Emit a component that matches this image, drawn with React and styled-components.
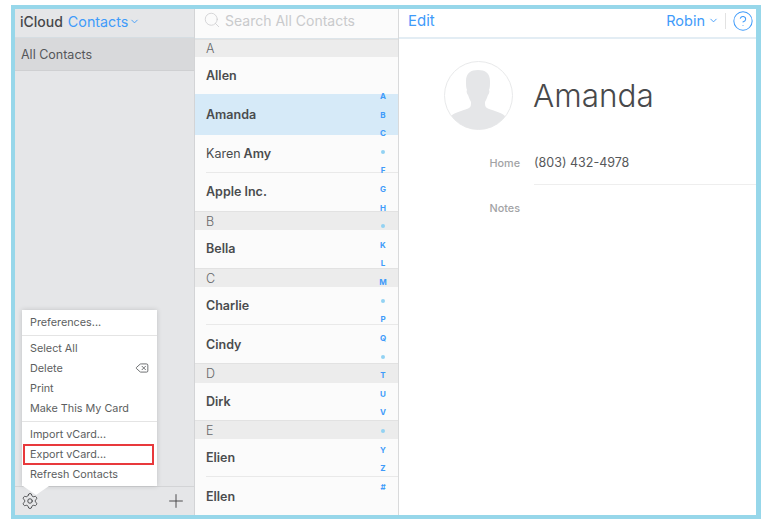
import React from 'react';
import styled, { createGlobalStyle } from 'styled-components';
import { Search, ChevronDown, Settings, Delete, Plus, CircleHelp } from 'lucide-react';

const GlobalStyle = createGlobalStyle`
    html, body {
        margin: 0;
        padding: 0;
        background: #ffffff;
    }
    *, *::before, *::after {
        box-sizing: border-box;
    }
`;

// --- Page frame ---

const Page = styled.div`
    width: 772px;
    height: 521px;
    padding: 5px 11px 2px 11px;
    font-family: Inter, "Liberation Sans", sans-serif;
    color: #444648;
    overflow: hidden;
`;

const Frame = styled.div`
    width: 750px;
    height: 514px;
    border: solid #97d7ea;
    border-width: 4px 5px 4px 4px;
    display: flex;
    background: #ffffff;
`;

// --- Sidebar ---

const Sidebar = styled.aside`
    position: relative;
    width: 180px;
    display: flex;
    flex-direction: column;
    background: #e5e6e8;
    border-right: 1px solid #d3d4d6;
`;

const SidebarHead = styled.div`
    height: 29px;
    padding: 0 0 3px 5px;
    display: flex;
    align-items: center;
    gap: 5px;
    border-bottom: 1px solid #d5dde2;
`;

const Brand = styled.span`
    color: #45474a;
    font-size: 14px;
    font-weight: 500;
`;

const BlueLink = styled.span`
    color: #3f9bfa;
    display: inline-flex;
    align-items: center;
    gap: ${p => p.$gap || 0}px;
    font-size: ${p => p.$size || 14.3}px;
`;

const GroupRow = styled.div`
    height: 33px;
    padding-left: 6px;
    display: flex;
    align-items: center;
    font-size: 12.5px;
    color: #55575a;
    background: #d8d9db;
    border-bottom: 1px solid #cfd0d2;
`;

const SidebarFoot = styled.div`
    margin-top: auto;
    height: 29px;
    padding: 0 7px 0 6px;
    display: flex;
    align-items: center;
    justify-content: space-between;
    color: #3f4143;
    border-top: 1px solid #d3d4d6;
`;

// --- Popup menu, floats over the sidebar ---

const Menu = styled.div`
    position: absolute;
    left: 7px;
    bottom: 29px;
    width: 135px;
    padding: 3px 0 1px;
    background: #ffffff;
    box-shadow: 0 0 5px rgba(0, 0, 0, 0.16);

    &::after {
        content: '';
        position: absolute;
        left: 1px;
        bottom: -9px;
        border-style: solid;
        border-width: 9px 13px 0 13px;
        border-color: #ffffff transparent transparent transparent;
    }
`;

const MenuItem = styled.div`
    position: relative;
    height: 20.3px;
    padding: 0 8px;
    display: flex;
    align-items: center;
    justify-content: space-between;
    font-size: 10.8px;
    color: #5c5e60;
`;

const Highlight = styled(MenuItem)`
    &::before {
        content: '';
        position: absolute;
        left: 1px;
        top: 0;
        width: 131px;
        height: 21px;
        border: 2px solid #e8393c;
    }
`;

const MenuRule = styled.div`
    height: 1px;
    margin: 2px 0;
    background: #e4e4e4;
`;

// --- Contact list ---

const ListPane = styled.section`
    position: relative;
    width: 204px;
    display: flex;
    flex-direction: column;
    background: #fbfbfb;
    border-right: 1px solid #d9dadb;
`;

const SearchBar = styled.div`
    height: 30px;
    padding: 0 0 7px 8px;
    display: flex;
    align-items: center;
    gap: 4px;
    font-size: 14px;
    color: #c9cacc;
    border-bottom: 1px solid #dde5ea;
`;

const SectionHead = styled.div`
    height: ${p => p.$h || 19}px;
    padding-left: 11px;
    display: flex;
    align-items: center;
    font-size: 12.5px;
    font-weight: 300;
    color: #66686a;
    background: #ececec;
    border-top: 1px solid #e2e2e2;
`;

const ContactRow = styled.div`
    position: relative;
    height: ${p => p.$h || 38}px;
    padding: ${p => (p.$low ? '1px 0 0 11px' : '0 0 1px 11px')};
    display: flex;
    align-items: center;
    gap: 3px;
    font-size: 12.5px;
    color: #4a4c4e;
    background: ${p => (p.$active ? '#d6eaf8' : 'transparent')};

    &::after {
        content: '';
        display: ${p => (p.$rule ? 'block' : 'none')};
        position: absolute;
        left: 11px;
        right: 0;
        bottom: 0;
        height: 1px;
        background: #e9e9e9;
    }
`;

const Strong = styled.span`
    font-weight: 600;
`;

const Light = styled.span`
    font-weight: 400;
`;

const AlphaIndex = styled.div`
    position: absolute;
    top: 82px;
    right: 10px;
    width: 10px;
    height: 401px;
    display: flex;
    flex-direction: column;
    justify-content: space-between;
    align-items: center;
`;

const AlphaItem = styled.span`
    height: 10px;
    line-height: 10px;
    font-size: 8px;
    font-weight: 700;
    color: #3f9bfa;
`;

const AlphaDot = styled.span`
    width: 4px;
    height: 4px;
    margin: 3px 0;
    border-radius: 50%;
    background: #93d2f3;
`;

// --- Detail pane ---

const Detail = styled.main`
    flex: 1;
    display: flex;
    flex-direction: column;
`;

const DetailHead = styled.div`
    height: 30px;
    padding: 0 2px 5px 9px;
    display: flex;
    align-items: center;
    justify-content: space-between;
    border-bottom: 2px solid #e3edf4;
`;

const HeadRight = styled.div`
    display: flex;
    align-items: center;
    gap: 6px;
`;

const HeadDivider = styled.span`
    width: 1px;
    height: 16px;
    background: #e2e2e2;
`;

const Profile = styled.div`
    padding: 22px 0 0 45px;
    display: flex;
    align-items: center;
    gap: 20px;
`;

const ContactName = styled.h1`
    margin: 0;
    font-size: 31.5px;
    font-weight: 300;
    color: #48494b;
`;

const Field = styled.div`
    margin-top: ${p => p.$top}px;
    display: grid;
    grid-template-columns: 135px 1fr;
    align-items: center;
`;

const FieldLabel = styled.span`
    padding-right: 14px;
    text-align: right;
    font-size: 10.8px;
    font-weight: 500;
    color: #a2a3a5;
`;

const FieldValue = styled.span`
    height: 44px;
    display: flex;
    align-items: center;
    font-size: 12.5px;
    color: #56585a;
    border-bottom: ${p => (p.$rule ? '1px solid #eeeeee' : 'none')};
`;

// --- Data ---

const letters = ['A', 'B', 'C', '•', 'F', 'G', 'H', '•', 'K', 'L', 'M', '•', 'P', 'Q', '•', 'T', 'U', 'V', '•', 'Y', 'Z', '#'];

function Avatar() {
    return (
        <svg width="69" height="69" viewBox="0 0 69 69">
            <defs>
                <clipPath id="avatar-clip">
                    <circle cx="34.5" cy="34.5" r="34" />
                </clipPath>
            </defs>
            <circle cx="34.5" cy="34.5" r="34" fill="#ffffff" stroke="#e8e9ea" />
            <path
                clipPath="url(#avatar-clip)"
                fill="#e5e6e8"
                d="M34 9c-7 0-12 3-12 11 0 4 0 7 1 9-1 1 0 4 1 5 1 3 2 5 3 7 0 3 0 5-2 6-3 2-14 4-18 8v14h54V55c-4-4-15-6-18-8-2-1-2-3-2-6 1-2 2-4 3-7 1-1 2-4 1-5 1-2 1-5 1-9 0-8-5-11-12-11z"
            />
        </svg>
    );
}

function App() {
    return (
        <Page>
            <GlobalStyle />
            <Frame>
                <Sidebar>
                    <SidebarHead>
                        <Brand>iCloud</Brand>
                        <BlueLink $gap={1}>Contacts <ChevronDown size={11} strokeWidth={2} /></BlueLink>
                    </SidebarHead>
                    <GroupRow>All Contacts</GroupRow>
                    <SidebarFoot>
                        <Settings size={18} strokeWidth={1.2} />
                        <Plus size={22} strokeWidth={1} />
                    </SidebarFoot>
                    <Menu>
                        <MenuItem>Preferences...</MenuItem>
                        <MenuRule />
                        <MenuItem>Select All</MenuItem>
                        <MenuItem>Delete <Delete size={14} strokeWidth={1.5} /></MenuItem>
                        <MenuItem>Print</MenuItem>
                        <MenuItem>Make This My Card</MenuItem>
                        <MenuRule />
                        <MenuItem>Import vCard...</MenuItem>
                        <Highlight>Export vCard...</Highlight>
                        <MenuItem>Refresh Contacts</MenuItem>
                    </Menu>
                </Sidebar>

                <ListPane>
                    <SearchBar>
                        <Search size={18} strokeWidth={1} />
                        Search All Contacts
                    </SearchBar>
                    <SectionHead $h={18}>A</SectionHead>
                    <ContactRow $h={37}><Strong>Allen</Strong></ContactRow>
                    <ContactRow $h={41} $active><Strong>Amanda</Strong></ContactRow>
                    <ContactRow $rule><Light>Karen</Light> <Strong>Amy</Strong></ContactRow>
                    <ContactRow><Strong>Apple Inc.</Strong></ContactRow>
                    <SectionHead>B</SectionHead>
                    <ContactRow><Strong>Bella</Strong></ContactRow>
                    <SectionHead>C</SectionHead>
                    <ContactRow $rule><Strong>Charlie</Strong></ContactRow>
                    <ContactRow $low><Strong>Cindy</Strong></ContactRow>
                    <SectionHead $h={20}>D</SectionHead>
                    <ContactRow $h={37}><Strong>Dirk</Strong></ContactRow>
                    <SectionHead>E</SectionHead>
                    <ContactRow $rule><Strong>Elien</Strong></ContactRow>
                    <ContactRow $low><Strong>Ellen</Strong></ContactRow>
                    <AlphaIndex>
                        {letters.map((l, i) => (
                            l === '•' ? <AlphaDot key={i} /> : <AlphaItem key={i}>{l}</AlphaItem>
                        ))}
                    </AlphaIndex>
                </ListPane>

                <Detail>
                    <DetailHead>
                        <BlueLink $size={15}>Edit</BlueLink>
                        <HeadRight>
                            <BlueLink $gap={3} $size={14.5}>Robin <ChevronDown size={11} strokeWidth={2} /></BlueLink>
                            <HeadDivider />
                            <BlueLink><CircleHelp size={22} strokeWidth={1.1} /></BlueLink>
                        </HeadRight>
                    </DetailHead>
                    <Profile>
                        <Avatar />
                        <ContactName>Amanda</ContactName>
                    </Profile>
                    <Field $top={11}>
                        <FieldLabel>Home</FieldLabel>
                        <FieldValue $rule>(803) 432-4978</FieldValue>
                    </Field>
                    <Field $top={1}>
                        <FieldLabel>Notes</FieldLabel>
                        <FieldValue />
                    </Field>
                </Detail>
            </Frame>
        </Page>
    );
}

export default App;
